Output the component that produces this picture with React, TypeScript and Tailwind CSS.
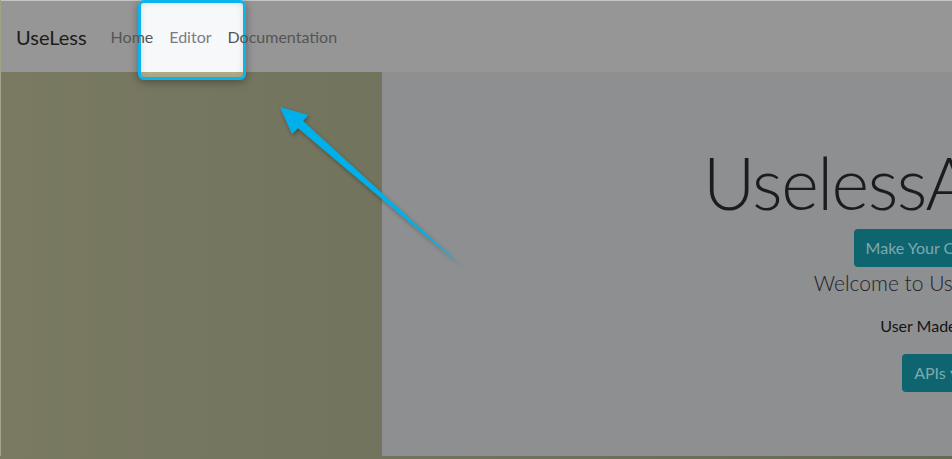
import React from "react";

const sans = { fontFamily: 'Lato, "Open Sans", sans-serif' };

function Arrow() {
  return (
    <svg
      className="pointer-events-none absolute left-0 top-0 z-20"
      width="952"
      height="459"
      viewBox="0 0 952 459"
    >
      <defs>
        <filter id="arrowShadow" x="-20%" y="-20%" width="140%" height="140%">
          <feDropShadow dx="1" dy="2" stdDeviation="2" floodColor="#000" floodOpacity="0.35" />
        </filter>
      </defs>
      <polygon
        points="280,107 308,115 303,121 465,269 298,128 292,134"
        fill="#05b0ea"
        filter="url(#arrowShadow)"
      />
    </svg>
  );
}

export default function App() {
  return (
    <div
      className="relative h-[459px] w-[952px] overflow-hidden bg-gradient-to-r from-[#7a7a62] to-[#656a57]"
      style={sans}
    >
      <div className="border-l border-[#a3a386]">
        <header className="relative z-10 flex h-[72px] items-center border-t border-[#c4c4c4] bg-[#969696] pl-[15px]">
          {/* spotlight box of the walkthrough, sits under the nav text */}
          <div className="absolute left-[137px] top-[-1px] h-[80px] w-[108px] rounded-[6px] border-[3px] border-[#0ab4ec] bg-[linear-gradient(to_bottom,#f7f8fa_69px,#aeae8c_69px)] shadow-[0_2px_8px_rgba(0,0,0,0.35),inset_0_0_6px_rgba(0,0,0,0.12)]" />
          <span className="relative mr-4 text-[20px] text-[#1c1c1c]">UseLess</span>
          <nav className="relative flex text-[16px] text-[#555555]">
            <a className="px-2">Home</a>
            <a className="px-2 text-[#7b7b84]">Editor</a>
            <a className="px-2">Documentation</a>
          </nav>
        </header>
        <div className="flex h-[384px]">
          <div className="w-[381px] shrink-0" />
          <section className="flex flex-1 overflow-hidden bg-[#8e8f91]">
            <div className="flex w-[1108px] shrink-0 flex-col items-center pt-[67px] text-[#1b1c1e]">
              <h1 className="text-[72px] font-light leading-[1.2] tracking-[-1.5px]">UselessAPIs.net</h1>
              <button className="mt-[4px] rounded-[4px] bg-[#0e6570] px-3 py-[7px] text-[16px] text-[#7fa9ad]">
                Make Your Own API
              </button>
              <p className="mt-[1px] text-[21px] leading-[30px] font-light text-[#222326]">Welcome to UselessAPIs.io</p>
              <p className="mt-[16px] text-[16px] text-[#141516]">User Made APIs</p>
              <button className="mt-[16px] rounded-[4px] bg-[#0e6570] px-3 py-[7px] text-[16px] text-[#7fa9ad]">
                APIs ▾
              </button>
            </div>
          </section>
        </div>
      </div>
      <Arrow />
    </div>
  );
}
